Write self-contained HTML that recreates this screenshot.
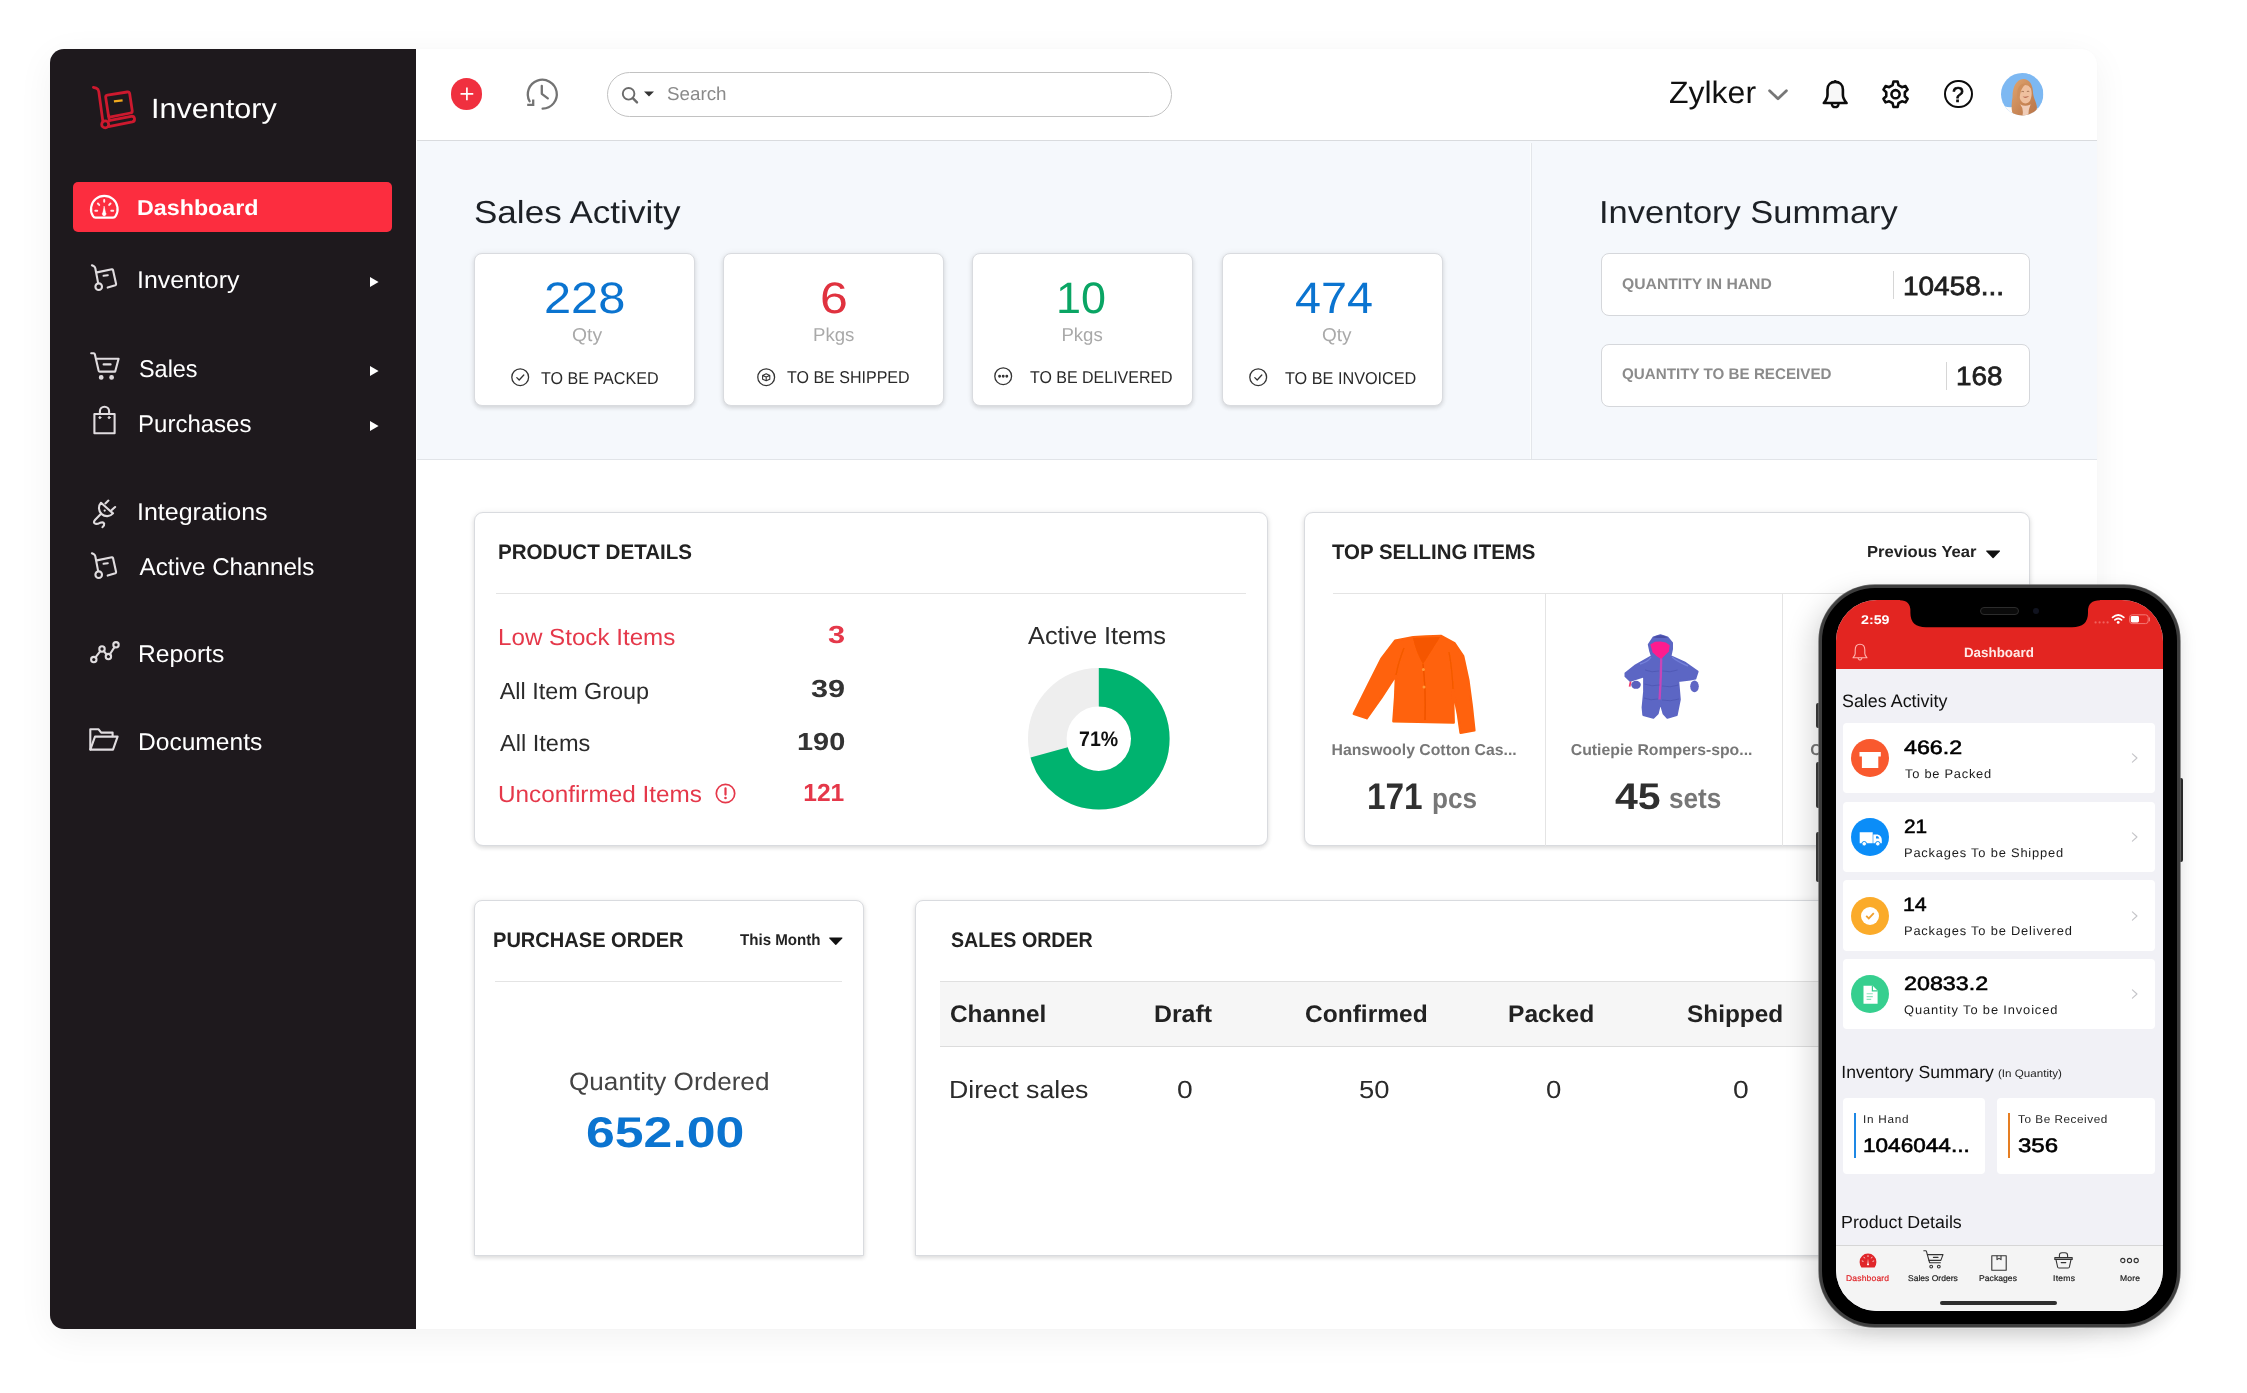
<!DOCTYPE html><html><head><meta charset="utf-8"><title>Inventory Dashboard</title><style>
*{box-sizing:border-box;margin:0;padding:0}
html,body{width:2247px;height:1393px;background:#fff;overflow:hidden}
body{font-family:"Liberation Sans",sans-serif;position:relative}
#root{position:absolute;left:0;top:0;width:2247px;height:1393px;will-change:transform}
.t{position:absolute;white-space:nowrap;transform-origin:0 50%;text-rendering:geometricPrecision}
.a{position:absolute}
svg{position:absolute;overflow:visible}
.card{position:absolute;background:#fff;border:1px solid #d9dbdf;border-radius:8px;box-shadow:0 2px 4px rgba(0,0,0,.12),0 0 7px rgba(0,0,0,.05)}
.ic{fill:none;stroke:#e0dcdf;stroke-width:2.1;stroke-linecap:round;stroke-linejoin:round}
</style></head><body><div id="root">
<div class="a" style="left:50px;top:49px;width:2047px;height:1280px;border-radius:16px;box-shadow:0 8px 36px rgba(0,0,0,.055),0 0 3px rgba(0,0,0,.03);background:#fff"></div>
<div class="a" style="left:50px;top:49px;width:366px;height:1280px;background:#1e191d;border-radius:14px 0 0 14px"></div>
<div class="a" style="left:417px;top:140px;width:1680px;height:320px;background:#f5f8fc;border-top:1px solid #d9dbde;border-bottom:1px solid #e1e4e8"></div>
<div class="a" style="left:1530px;top:143px;width:1px;height:316px;background:#fbfdfe"></div><div class="a" style="left:1531px;top:143px;width:1px;height:316px;background:#e3e6ea"></div>
<svg style="left:84px;top:78px" width="60" height="60" viewBox="84 78 60 60" fill="none" stroke="#cd192e" stroke-width="2.8" stroke-linecap="round" stroke-linejoin="round">
<path d="M93.4 87.4 L96.2 88.1 Q98.4 88.9 98.8 91.6 L102.9 121.6"/>
<path d="M107.4 95.1 L127.2 92 Q129.3 91.7 129.7 93.8 L132.2 110.6 Q132.5 112.6 130.5 113 L110.8 116.9 Q108.7 117.3 108.4 115.2 L105.7 97.4 Q105.4 95.4 107.4 95.1 Z"/>
<path d="M108.4 115.2 L109.4 120.6"/>
<path d="M110.2 120.4 L131.2 116.3 Q134 116 134.5 118.6 Q134.9 121.2 132.3 121.9 L108.6 126.6"/>
<circle cx="105.2" cy="124.4" r="3.5"/>
<path d="M113.9 101.4 L122.6 100.3" stroke="#f0a91e" stroke-width="2.3" stroke-linecap="butt"/>
</svg>
<span class="t" style="left:150.78px;top:90.67px;font-size:27.80px;line-height:36px;color:#fff;transform:scaleX(1.0991);">Inventory</span>
<div class="a" style="left:73px;top:182px;width:319px;height:50px;background:#fc2d3f;border-radius:5px"></div>
<svg style="left:80px;top:185px" width="60" height="45" viewBox="80 185 60 45" fill="none" stroke="#fff" stroke-width="2.2" stroke-linecap="round" stroke-linejoin="round">
<path d="M95.59 217.7 Q93.79 217.7 92.99 216.10 A13.3 13.3 0 1 1 115.61 216.10 Q114.81 217.7 113.01 217.7 Z"/>
<path d="M104.2 206.4 L105.5 212.6 A1.9 1.9 0 1 1 102.8 212.6 Z" fill="#fff" stroke-width=".5"/>
<path d="M104.2 199.9v1.8M97.9 203.5l1.3 1.4M110.5 203.5l-1.3 1.4M95.3 210.8h1.9M113.2 210.8h-1.9" stroke-width="2" opacity=".88"/>
</svg>
<span class="t" style="left:137.44px;top:193.62px;font-size:21.60px;line-height:28px;color:#fff;transform:scaleX(1.0777);font-weight:700;">Dashboard</span>
<span class="t" style="left:137.30px;top:265.01px;font-size:24.20px;line-height:31px;color:#fff;transform:scaleX(1.0292);">Inventory</span>
<svg style="left:369.8px;top:277.0px" width="9" height="10" viewBox="0 0 9 10"><path d="M0 0L8.6 5L0 10Z" fill="#fff"/></svg>
<span class="t" style="left:138.54px;top:353.81px;font-size:24.20px;line-height:31px;color:#fff;transform:scaleX(0.9682);">Sales</span>
<svg style="left:369.8px;top:365.8px" width="9" height="10" viewBox="0 0 9 10"><path d="M0 0L8.6 5L0 10Z" fill="#fff"/></svg>
<span class="t" style="left:137.63px;top:408.81px;font-size:24.20px;line-height:31px;color:#fff;transform:scaleX(0.9930);">Purchases</span>
<svg style="left:369.8px;top:420.8px" width="9" height="10" viewBox="0 0 9 10"><path d="M0 0L8.6 5L0 10Z" fill="#fff"/></svg>
<span class="t" style="left:137.29px;top:496.71px;font-size:24.20px;line-height:31px;color:#fff;transform:scaleX(1.0328);">Integrations</span>
<span class="t" style="left:139.55px;top:551.81px;font-size:24.20px;line-height:31px;color:#fff;">Active Channels</span>
<span class="t" style="left:137.58px;top:639.21px;font-size:24.20px;line-height:31px;color:#fff;transform:scaleX(1.0186);">Reports</span>
<span class="t" style="left:137.58px;top:727.01px;font-size:24.20px;line-height:31px;color:#fff;transform:scaleX(1.0156);">Documents</span>
<svg class="ic" style="left:84px;top:258px" width="40" height="40" viewBox="84 258 40 40" stroke-width="2.15">
<path d="M91.9 265.3 L94 266.3 Q95 266.9 95.3 268.2 L98.1 282.9"/>
<circle cx="98.7" cy="286.7" r="3.3"/>
<path d="M96.9 272.4 L111.9 269.3 Q112.8 269.1 113 270 L116.1 284.1 Q116.3 285 115.4 285.3 L107.7 287.6"/>
<path d="M103.6 275.8 L107.8 275.2"/>
</svg>
<svg class="ic" style="left:84px;top:546.4px" width="40" height="40" viewBox="84 258 40 40" stroke-width="2.15">
<path d="M91.9 265.3 L94 266.3 Q95 266.9 95.3 268.2 L98.1 282.9"/>
<circle cx="98.7" cy="286.7" r="3.3"/>
<path d="M96.9 272.4 L111.9 269.3 Q112.8 269.1 113 270 L116.1 284.1 Q116.3 285 115.4 285.3 L107.7 287.6"/>
<path d="M103.6 275.8 L107.8 275.2"/>
</svg>
<svg class="ic" style="left:89.5px;top:352px" width="30" height="28" viewBox="0 0 30 28">
<path d="M1.2 1.3 H3.6 Q4.6 1.4 4.9 2.4 L8.6 18.6 Q8.9 19.6 9.9 19.6 H25.2 L28.6 6.8 H6.1"/>
<path d="M13.6 12.4 H20.6"/>
<circle cx="11.2" cy="25.4" r="1.7" fill="#d9d5d8" stroke-width="1.4"/><circle cx="21.6" cy="25.4" r="1.7" fill="#d9d5d8" stroke-width="1.4"/>
</svg>
<svg class="ic" style="left:92.8px;top:404.6px" width="23" height="30" viewBox="0 0 23 30" stroke-linejoin="miter">
<path d="M1.4 9 H21.6 V28.2 H1.4 Z"/>
<path d="M6.9 8.6 V6.3 A4.6 4.6 0 0 1 16.1 6.3 V8.6"/>
<circle cx="6.9" cy="12.6" r="1" fill="#d9d5d8" stroke-width="1"/><circle cx="16.1" cy="12.6" r="1" fill="#d9d5d8" stroke-width="1"/>
</svg>
<svg class="ic" style="left:84px;top:492px" width="40" height="40" viewBox="84 492 40 40" stroke-width="2.1">
<path d="M101 502.8 L113 513.4 A8 8 0 0 1 101 502.8 Z"/>
<path d="M105.4 503.4 L108.4 500.6 M111.7 510 L115.1 507"/>
<circle cx="104.7" cy="510.6" r="1.1" fill="#e4e0e3" stroke="none"/>
<path d="M100.8 514 L95.2 519.8 Q92.6 522.8 95.4 523.8 Q97.4 524.2 100 522.8 Q103.4 521.6 104.2 523.6 Q104.6 525.4 102.4 527.2"/>
</svg>
<svg class="ic" style="left:89.6px;top:641.4px" width="30" height="23" viewBox="0 0 30 23">
<circle cx="3.8" cy="18.6" r="2.7"/><circle cx="12" cy="8" r="2.7"/><circle cx="18.4" cy="15.6" r="2.7"/><circle cx="26" cy="3.8" r="2.7"/>
<path d="M5.5 16.4 L10.3 10.2 M13.8 10.1 L16.6 13.5 M19.9 13.3 L24.5 6.1"/>
</svg>
<svg class="ic" style="left:89.4px;top:728.4px" width="30" height="23" viewBox="0 0 30 23" stroke-linejoin="miter">
<path d="M1.3 21.6 V1.3 H9.6 L12.2 4.6 H23.6 V8.2"/>
<path d="M1.3 21.6 L6 8.6 H28.6 L24 21.6 Z"/>
</svg>
<div class="a" style="left:450.6px;top:78.2px;width:31.8px;height:31.8px;border-radius:50%;background:#f0303f"></div>
<svg style="left:450.6px;top:78.2px" width="31.8" height="31.8" viewBox="0 0 32 32"><path d="M16 9.6V22.4M9.6 16H22.4" stroke="#fff" stroke-width="1.7" fill="none"/></svg>
<svg style="left:526px;top:78px" width="34" height="34" viewBox="526 78 34 34" fill="none" stroke="#737373" stroke-width="2.3" stroke-linecap="round" stroke-linejoin="round">
<path d="M542.6 108.7 A14.5 14.5 0 1 0 529.6 101.2"/>
<path d="M527.2 104.9 H533.2 V99.6" stroke-linejoin="miter" stroke-linecap="butt"/>
<path d="M541.8 85.8 V93.8 L547.8 98.3"/>
</svg>
<div class="a" style="left:606.8px;top:71.8px;width:565.6px;height:44.8px;border:1.5px solid #c2c2c2;border-radius:23px;background:#fff"></div>
<svg style="left:621px;top:86px" width="18" height="18" viewBox="0 0 18 18" fill="none" stroke="#6b6b6b" stroke-width="1.9" stroke-linecap="round"><circle cx="7.6" cy="7.8" r="5.8"/><path d="M11.8 12.2 L16 16.4" stroke-width="2.4"/></svg>
<svg style="left:644px;top:91.4px" width="10" height="6" viewBox="0 0 10 6"><path d="M0 0.4H10L5 5.6Z" fill="#333"/></svg>
<span class="t" style="left:666.65px;top:82.16px;font-size:18.60px;line-height:24px;color:#8a8a8a;transform:scaleX(1.0109);">Search</span>
<span class="t" style="left:1669.49px;top:72.86px;font-size:31.00px;line-height:40px;color:#111;transform:scaleX(1.0315);">Zylker</span>
<svg style="left:1768px;top:89px" width="20" height="12" viewBox="0 0 20 12" fill="none" stroke="#777" stroke-width="2.8" stroke-linecap="round" stroke-linejoin="round"><path d="M1.6 1.8 L10 9.8 L18.4 1.8"/></svg>
<svg style="left:1821px;top:79px" width="29" height="31" viewBox="0 0 29 31" fill="none" stroke="#0c0c0c" stroke-width="2.6" stroke-linecap="round" stroke-linejoin="round">
<path d="M14.2 2.2 V2.8"/>
<path d="M6.5 16 V10.6 C6.5 5.8 9.9 2.9 14.2 2.9 C18.5 2.9 21.9 5.8 21.9 10.6 V16 C21.9 19.4 23.4 21.4 25.6 24 H2.8 C5 21.4 6.5 19.4 6.5 16 Z" fill="#f8f8f8"/>
<path d="M10.8 25.2 C11.2 27.4 12.6 28.2 14.2 28.2 C15.8 28.2 17.2 27.4 17.6 25.2" stroke-width="2.2"/>
</svg>
<svg style="left:1881px;top:79px" width="30" height="31" viewBox="0 0 30 31" fill="none" stroke="#0c0c0c" stroke-width="2.6" stroke-linejoin="round">
<path d="M11.61 6.16 L12.47 2.47 L16.63 2.47 L17.49 6.16 L20.91 8.14 L24.53 7.03 L26.62 10.64 L23.84 13.22 L23.84 17.18 L26.62 19.76 L24.53 23.37 L20.91 22.26 L17.49 24.24 L16.63 27.93 L12.47 27.93 L11.61 24.24 L8.19 22.26 L4.57 23.37 L2.48 19.76 L5.26 17.18 L5.26 13.22 L2.48 10.64 L4.57 7.03 L8.19 8.14Z"/><circle cx="14.55" cy="15.2" r="4.1"/></svg>
<div class="a" style="left:1944.2px;top:80px;width:28.4px;height:28.4px;border:2.7px solid #0c0c0c;border-radius:50%"></div>
<span class="t" style="left:1952.32px;top:81.25px;font-size:21.50px;line-height:28px;color:#0c0c0c;transform:scaleX(0.9924);-webkit-text-stroke:.7px #0c0c0c;">?</span>
<svg style="left:2001px;top:73px" width="42.4" height="42.4" viewBox="0 0 42 42">
<defs><clipPath id="av"><circle cx="21" cy="21" r="21"/></clipPath>
<linearGradient id="hg" x1="0" y1="0" x2="1" y2="1"><stop offset="0" stop-color="#e0a672"/><stop offset=".55" stop-color="#c98756"/><stop offset="1" stop-color="#b9764a"/></linearGradient></defs>
<g clip-path="url(#av)"><rect width="42" height="42" fill="#7db8f2"/>
<path d="M-2 42 L3 33 Q10 35 14 33 L30 33 Q35 36 40 35 L44 42 Z" fill="#fdfbfa"/>
<path d="M12.4 43 C9.6 36 10.4 30 11.4 24 C11.4 13.5 15.4 6.4 22 6 C29.4 6.4 31.6 13.4 31.8 20 C32.4 26 36.4 31 35.4 36 C34.4 39.4 32 41.4 30 43 Z" fill="url(#hg)"/>
<path d="M18.4 14.4 C21.4 10.6 27.4 11 29.6 15.4 C31 19.4 30.6 25.4 27.8 28.8 C25.8 30.6 22.6 30.6 20.6 28.6 C17.8 25.4 16.8 18.6 18.4 14.4 Z" fill="#efc09f"/>
<path d="M16.2 19.4 C16.6 13 20.6 9.6 25.4 10.6 C22.4 12.4 19.6 15.6 18.6 23.4 C17.8 26.4 17.6 29.4 18.6 32.4 C16.4 29 15.6 24 16.2 19.4 Z" fill="#cf8f5c"/>
<path d="M21.4 23.2 Q24.6 26 28 22.8 Q24.8 24.2 21.4 23.2 Z" fill="#a8553f"/>
<path d="M20.2 18.6 Q21.6 17.9 22.8 18.6 M25.6 18.4 Q26.8 17.7 28 18.4" stroke="#8a5a3c" stroke-width=".7" fill="none"/>
<path d="M19 31 Q23 36 21 43 L27 43 Q27 36 29.4 31 Q24 34 19 31 Z" fill="#f0cdb8"/>
</g></svg>
<span class="t" style="left:474.01px;top:191.98px;font-size:31.80px;line-height:41px;color:#1d2126;transform:scaleX(1.1021);">Sales Activity</span>
<span class="t" style="left:1599.22px;top:191.98px;font-size:31.80px;line-height:41px;color:#1d2126;transform:scaleX(1.0840);">Inventory Summary</span>
<div class="card" style="left:474px;top:253px;width:221px;height:153px"></div>
<span class="t" style="left:543.95px;top:270.35px;font-size:44.00px;line-height:57px;color:#0b74d0;transform:scaleX(1.1084);">228</span>
<span class="t" style="left:572.49px;top:322.66px;font-size:18.60px;line-height:24px;color:#a9a9a9;transform:scaleX(1.0386);">Qty</span>
<span class="t" style="left:540.64px;top:367.24px;font-size:17.20px;line-height:22px;color:#2a2a2a;transform:scaleX(0.9379);">TO BE PACKED</span>
<svg style="left:510.8px;top:368.2px" width="18.4" height="18.4" viewBox="0 0 18.4 18.4" fill="none" stroke="#333" stroke-width="1.3" stroke-linecap="round" stroke-linejoin="round"><circle cx="9.2" cy="9.2" r="8.4"/><path d="M5.8 9.6 L8.2 12 L12.8 7"/></svg>
<div class="card" style="left:723px;top:253px;width:221px;height:153px"></div>
<span class="t" style="left:820.06px;top:270.35px;font-size:44.00px;line-height:57px;color:#e0323f;transform:scaleX(1.1378);">6</span>
<span class="t" style="left:813.08px;top:322.66px;font-size:18.60px;line-height:24px;color:#a9a9a9;">Pkgs</span>
<span class="t" style="left:787.34px;top:366.14px;font-size:17.20px;line-height:22px;color:#2a2a2a;transform:scaleX(0.9327);">TO BE SHIPPED</span>
<svg style="left:757px;top:367.5px" width="18.4" height="18.4" viewBox="0 0 18.4 18.4" fill="none" stroke="#333" stroke-width="1.3" stroke-linecap="round" stroke-linejoin="round"><circle cx="9.2" cy="9.2" r="8.4"/><path d="M5.6 7.4 L9.2 5.8 L12.8 7.4 V11.2 L9.2 12.8 L5.6 11.2 Z M5.6 7.4 L9.2 9 L12.8 7.4 M9.2 9 V12.8" stroke-width="1.1"/></svg>
<div class="card" style="left:972px;top:253px;width:221px;height:153px"></div>
<span class="t" style="left:1056.28px;top:270.35px;font-size:44.00px;line-height:57px;color:#0aa564;transform:scaleX(1.0212);">10</span>
<span class="t" style="left:1061.38px;top:322.66px;font-size:18.60px;line-height:24px;color:#a9a9a9;">Pkgs</span>
<span class="t" style="left:1029.84px;top:366.14px;font-size:17.20px;line-height:22px;color:#2a2a2a;transform:scaleX(0.9293);">TO BE DELIVERED</span>
<svg style="left:993.6px;top:367px" width="18.4" height="18.4" viewBox="0 0 18.4 18.4" fill="none" stroke="#333" stroke-width="1.3" stroke-linecap="round" stroke-linejoin="round"><circle cx="9.2" cy="9.2" r="8.4"/><circle cx="5.6" cy="9.2" r=".8" fill="#333"/><circle cx="9.2" cy="9.2" r=".8" fill="#333"/><circle cx="12.8" cy="9.2" r=".8" fill="#333"/></svg>
<div class="card" style="left:1222px;top:253px;width:221px;height:153px"></div>
<span class="t" style="left:1295.33px;top:270.35px;font-size:44.00px;line-height:57px;color:#0b74d0;transform:scaleX(1.0617);">474</span>
<span class="t" style="left:1321.70px;top:322.66px;font-size:18.60px;line-height:24px;color:#a9a9a9;transform:scaleX(1.0208);">Qty</span>
<span class="t" style="left:1284.84px;top:367.24px;font-size:17.20px;line-height:22px;color:#2a2a2a;transform:scaleX(0.9441);">TO BE INVOICED</span>
<svg style="left:1249px;top:368.2px" width="18.4" height="18.4" viewBox="0 0 18.4 18.4" fill="none" stroke="#333" stroke-width="1.3" stroke-linecap="round" stroke-linejoin="round"><circle cx="9.2" cy="9.2" r="8.4"/><path d="M5.8 9.6 L8.2 12 L12.8 7"/></svg>
<div class="a" style="left:1601px;top:253px;width:429px;height:63px;background:#fff;border:1px solid #d5d7db;border-radius:8px"></div>
<span class="t" style="left:1622.36px;top:275.46px;font-size:15.40px;line-height:20px;color:#8b8b8b;transform:scaleX(1.0206);font-weight:700;">QUANTITY IN HAND</span>
<div class="a" style="left:1893px;top:270.5px;width:1px;height:28.5px;background:#d6d6d6"></div>
<span class="t" style="left:1903.47px;top:268.95px;font-size:26.40px;line-height:34px;color:#1f1f1f;transform:scaleX(1.0594);-webkit-text-stroke:.75px #1f1f1f;">10458...</span>
<div class="a" style="left:1601px;top:344px;width:429px;height:63px;background:#fff;border:1px solid #d5d7db;border-radius:8px"></div>
<span class="t" style="left:1622.38px;top:365.46px;font-size:15.40px;line-height:20px;color:#8b8b8b;transform:scaleX(0.9867);font-weight:700;">QUANTITY TO BE RECEIVED</span>
<div class="a" style="left:1945.5px;top:361.5px;width:1px;height:28.5px;background:#d6d6d6"></div>
<span class="t" style="left:1955.98px;top:358.95px;font-size:26.40px;line-height:34px;color:#1f1f1f;transform:scaleX(1.0565);-webkit-text-stroke:.75px #1f1f1f;">168</span>
<div class="card" style="left:474px;top:512px;width:794px;height:334px;border-radius:9px"></div>
<span class="t" style="left:498.32px;top:538.92px;font-size:21.00px;line-height:27px;color:#222;transform:scaleX(0.9805);font-weight:700;">PRODUCT DETAILS</span>
<div class="a" style="left:496.2px;top:592.6px;width:750px;height:1.4px;background:#e4e4e4"></div>
<span class="t" style="left:497.72px;top:621.69px;font-size:23.40px;line-height:30px;color:#e5384a;transform:scaleX(1.0332);">Low Stock Items</span>
<span class="t" style="left:827.59px;top:619.98px;font-size:24.60px;line-height:32px;color:#e5384a;transform:scaleX(1.2512);font-weight:700;">3</span>
<span class="t" style="left:499.65px;top:676.09px;font-size:23.40px;line-height:30px;color:#2b2b2b;">All Item Group</span>
<span class="t" style="left:810.60px;top:674.38px;font-size:24.60px;line-height:32px;color:#333;transform:scaleX(1.2478);font-weight:700;">39</span>
<span class="t" style="left:499.65px;top:728.49px;font-size:23.40px;line-height:30px;color:#2b2b2b;transform:scaleX(1.0065);">All Items</span>
<span class="t" style="left:796.58px;top:726.78px;font-size:24.60px;line-height:32px;color:#333;transform:scaleX(1.1745);font-weight:700;">190</span>
<span class="t" style="left:497.82px;top:779.49px;font-size:23.40px;line-height:30px;color:#e5384a;transform:scaleX(1.0386);">Unconfirmed Items</span>
<span class="t" style="left:803.25px;top:777.78px;font-size:24.60px;line-height:32px;color:#e5384a;font-weight:700;">121</span>
<svg style="left:715px;top:782.6px" width="21" height="21" viewBox="0 0 21 21" fill="none" stroke="#e5384a" stroke-width="1.7" stroke-linecap="round"><circle cx="10.5" cy="10.5" r="9.2"/><path d="M10.5 5.4V11.6" stroke-width="2.2"/><circle cx="10.5" cy="15" r=".6" fill="#e5384a" stroke-width="1.4"/></svg>
<span class="t" style="left:1027.95px;top:621.08px;font-size:24.60px;line-height:32px;color:#2b2b2b;transform:scaleX(1.0298);">Active Items</span>
<svg style="left:0;top:0" width="2247" height="1393" viewBox="0 0 2247 1393" pointer-events="none">
<circle cx="1098.8" cy="738.7" r="51.5" fill="none" stroke="#eeeeee" stroke-width="38.6"/>
<circle cx="1098.8" cy="738.7" r="51.5" fill="none" stroke="#00b36f" stroke-width="38.6" stroke-dasharray="228.45 323.58" transform="rotate(-90 1098.8 738.7)"/>
</svg>
<span class="t" style="left:1079.06px;top:726.12px;font-size:21.00px;line-height:27px;color:#111;transform:scaleX(0.9316);font-weight:700;">71%</span>
<div class="card" style="left:1304px;top:512px;width:726px;height:334px;border-radius:9px"></div>
<span class="t" style="left:1332.37px;top:538.92px;font-size:21.00px;line-height:27px;color:#222;transform:scaleX(0.9722);font-weight:700;">TOP SELLING ITEMS</span>
<span class="t" style="left:1866.79px;top:542.26px;font-size:16.00px;line-height:21px;color:#222;transform:scaleX(1.0370);font-weight:700;">Previous Year</span>
<svg style="left:1985.6px;top:549.6px" width="14.2" height="8.4" viewBox="0 0 14.2 8.4"><path d="M0.6 0.4H13.6Q14.4 0.6 13.8 1.4L7.6 8Q7.1 8.4 6.6 8L0.4 1.4Q-.2 .6 .6 .4Z" fill="#111"/></svg>
<div class="a" style="left:1332.6px;top:592.6px;width:697px;height:1.4px;background:#e4e4e4"></div>
<div class="a" style="left:1545.2px;top:593px;width:1.3px;height:253px;background:#e4e4e4"></div>
<div class="a" style="left:1781.6px;top:593px;width:1.3px;height:253px;background:#e4e4e4"></div>
<svg style="left:1340px;top:620px" width="150" height="120" viewBox="1340 620 150 120">
<defs><filter id="sb" x="-5%" y="-5%" width="110%" height="110%"><feGaussianBlur stdDeviation=".5"/></filter></defs>
<g filter="url(#sb)">
<polygon points="1395.1,640.7 1413.2,637.2 1426.2,636.4 1440.8,635.9 1454.6,643.3 1463.2,656.2 1468.4,680.3 1471.8,706.2 1474.4,730.3 1460.6,732.9 1458.0,714.8 1452.9,688.9 1453.7,722.5 1393.4,721.2 1395.1,697.5 1396.0,675.1 1381.4,697.5 1366.7,718.2 1353.8,713.9 1368.4,684.6 1381.4,658.8" fill="#ff6208" stroke="#ff6208" stroke-width="2.4" stroke-linejoin="round"/>
<path d="M1413 638 Q1416 652 1423 664 Q1432 650 1440 637" fill="#f55600"/>
<path d="M1423 664 Q1426 690 1425 720" stroke="#ee5200" stroke-width="1.3" fill="none"/>
<path d="M1396 675 Q1399 660 1404 648 M1453 689 Q1452 668 1449 652" stroke="#f25800" stroke-width="1.2" fill="none"/>
<circle cx="1423.4" cy="669.6" r="1.5" fill="#ff9a3a"/><circle cx="1424" cy="687" r="1.5" fill="#ff9a3a"/>
</g></svg>
<svg style="left:1610px;top:622px" width="110" height="108" viewBox="1610 622 110 108">
<g filter="url(#sb)">
<polygon points="1660.4,635.2 1653.4,637.5 1648.8,644.5 1650.3,651.5 1651.9,656.1 1635.6,665.4 1625.5,673.2 1625.5,676.3 1630.2,680.9 1644.1,676.3 1644.1,691.8 1642.6,707.3 1643.3,715.0 1653.4,717.7 1657.7,713.5 1660.4,702.6 1663.5,713.5 1667.4,717.7 1676.7,715.0 1679.8,699.5 1678.2,680.9 1690.6,679.4 1695.3,678.6 1697.6,671.6 1684.4,662.3 1670.5,656.1 1672.0,649.1 1672.0,642.9 1667.4,637.5" fill="#5c66c4" stroke="#5c66c4" stroke-width="2" stroke-linejoin="round"/>
<path d="M1653 637.5 Q1660 633 1668 637.5 Q1662 638.5 1653 637.5Z" fill="#4a4ea6"/>
<polygon points="1650.3,644.5 1655.0,641.8 1660.4,641.4 1665.8,642.5 1669.7,645.3 1668.9,651.5 1664.3,656.1 1661.2,659.2 1656.5,656.1 1652.6,652.2" fill="#ff1d8e"/>
<path d="M1661.2 658.4 L1660.8 676.3 L1659.6 699.5" stroke="#c745b8" stroke-width="2.3" fill="none"/>
<ellipse cx="1636" cy="684.8" rx="4.8" ry="4" fill="#5a60bd"/><path d="M1630.6 681.6 L1629.6 686.6" stroke="#ef3a6a" stroke-width="1.8"/>
<ellipse cx="1694.5" cy="686.3" rx="4.3" ry="5.9" fill="#5f66c4"/>
<path d="M1645 670 Q1652 673 1659 671 M1644.5 684 Q1652 687 1659.5 685 M1644 698 Q1651 701 1658 699 M1662.5 671 Q1670 673 1677.5 670 M1662 686 Q1670 688 1678.5 685 M1662 700 Q1670 702 1679 699" stroke="#4f58b4" stroke-width=".9" fill="none"/>
<path d="M1640 664 Q1648 662 1651 657 M1672 657 Q1678 662 1688 666" stroke="#7480da" stroke-width="1.4" fill="none"/>
</g></svg>
<span class="t" style="left:1331.54px;top:740.13px;font-size:15.80px;line-height:21px;color:#777;font-weight:700;">Hanswooly Cotton Cas...</span>
<span class="t" style="left:1570.75px;top:740.13px;font-size:15.80px;line-height:21px;color:#777;font-weight:700;">Cutiepie Rompers-spo...</span>
<span class="t" style="left:1810.35px;top:740.13px;font-size:15.80px;line-height:21px;color:#777;font-weight:700;">C</span>
<span class="t" style="left:1366.90px;top:772.88px;font-size:37.00px;line-height:48px;color:#2f2f2f;transform:scaleX(0.9011);font-weight:700;">171</span>
<span class="t" style="left:1431.67px;top:781.32px;font-size:28.50px;line-height:37px;color:#777;transform:scaleX(0.9183);font-weight:700;">pcs</span>
<span class="t" style="left:1615.08px;top:772.88px;font-size:37.00px;line-height:48px;color:#2f2f2f;transform:scaleX(1.1095);font-weight:700;">45</span>
<span class="t" style="left:1669.08px;top:781.32px;font-size:28.50px;line-height:37px;color:#777;transform:scaleX(0.9185);font-weight:700;">sets</span>
<div class="card" style="left:474px;top:900px;width:390px;height:356px;border-radius:8px 8px 0 0"></div>
<span class="t" style="left:493.26px;top:927.02px;font-size:21.00px;line-height:27px;color:#222;transform:scaleX(0.9550);font-weight:700;">PURCHASE ORDER</span>
<span class="t" style="left:739.93px;top:929.93px;font-size:15.80px;line-height:21px;color:#222;transform:scaleX(0.9568);font-weight:700;">This Month</span>
<svg style="left:828.8px;top:936.8px" width="13.6" height="8.2" viewBox="0 0 14.2 8.4"><path d="M0.6 0.4H13.6Q14.4 0.6 13.8 1.4L7.6 8Q7.1 8.4 6.6 8L0.4 1.4Q-.2 .6 .6 .4Z" fill="#111"/></svg>
<div class="a" style="left:494.6px;top:981px;width:347.8px;height:1.4px;background:#e4e4e4"></div>
<span class="t" style="left:569.06px;top:1065.84px;font-size:25.00px;line-height:32px;color:#444;transform:scaleX(1.0452);">Quantity Ordered</span>
<span class="t" style="left:586.10px;top:1105.00px;font-size:43.00px;line-height:56px;color:#0b74d0;transform:scaleX(1.2045);font-weight:700;">652.00</span>
<div class="card" style="left:915px;top:900px;width:1115px;height:356px;border-radius:8px 8px 0 0"></div>
<span class="t" style="left:950.63px;top:927.02px;font-size:21.00px;line-height:27px;color:#222;transform:scaleX(0.9346);font-weight:700;">SALES ORDER</span>
<div class="a" style="left:940px;top:981.4px;width:1089px;height:65.4px;background:#f6f6f6;border-top:1.4px solid #e0e0e0;border-bottom:1.4px solid #dcdcdc"></div>
<span class="t" style="left:950.20px;top:998.58px;font-size:24.00px;line-height:31px;color:#222;transform:scaleX(1.0164);font-weight:700;">Channel</span>
<span class="t" style="left:1154.24px;top:998.58px;font-size:24.00px;line-height:31px;color:#222;transform:scaleX(1.0350);font-weight:700;">Draft</span>
<span class="t" style="left:1304.69px;top:998.58px;font-size:24.00px;line-height:31px;color:#222;transform:scaleX(1.0219);font-weight:700;">Confirmed</span>
<span class="t" style="left:1507.65px;top:998.58px;font-size:24.00px;line-height:31px;color:#222;transform:scaleX(1.0251);font-weight:700;">Packed</span>
<span class="t" style="left:1686.50px;top:998.58px;font-size:24.00px;line-height:31px;color:#222;transform:scaleX(1.0163);font-weight:700;">Shipped</span>
<span class="t" style="left:949.01px;top:1075.31px;font-size:24.80px;line-height:32px;color:#2b2b2b;transform:scaleX(1.0757);">Direct sales</span>
<span class="t" style="left:1177.10px;top:1075.31px;font-size:24.80px;line-height:32px;color:#2b2b2b;letter-spacing:0.43px;transform:scaleX(1.1400);">0</span>
<span class="t" style="left:1359.10px;top:1075.31px;font-size:24.80px;line-height:32px;color:#2b2b2b;transform:scaleX(1.1044);">50</span>
<span class="t" style="left:1545.82px;top:1075.31px;font-size:24.80px;line-height:32px;color:#2b2b2b;transform:scaleX(1.1134);">0</span>
<span class="t" style="left:1732.80px;top:1075.31px;font-size:24.80px;line-height:32px;color:#2b2b2b;letter-spacing:0.16px;transform:scaleX(1.1400);">0</span>
<div class="a" style="left:1816px;top:703px;width:5px;height:25px;background:#3c3c3c;border-radius:2px"></div>
<div class="a" style="left:1816px;top:762px;width:5px;height:46px;background:#3c3c3c;border-radius:2px"></div>
<div class="a" style="left:1816px;top:832px;width:5px;height:50px;background:#3c3c3c;border-radius:2px"></div>
<div class="a" style="left:2178px;top:778px;width:5px;height:84px;background:#2b2b2b;border-radius:2px"></div>
<div class="a" style="left:1819px;top:585px;width:361.0px;height:742.0px;border-radius:56px;background:#000;border:3px solid #3e3e3e;box-shadow:0 0 0 .7px #6e6e6e,-10px 8px 26px rgba(0,0,0,.13), 4px 6px 16px rgba(0,0,0,.07)"></div>
<div class="a" style="left:1836px;top:600px;width:327.0px;height:711.0px;border-radius:41px;background:#f1f1f6;overflow:hidden"><div class="a" style="left:0;top:0;width:100%;height:68.6px;background:#e32521"></div><div class="a" style="left:0;top:645.4px;width:100%;height:70px;background:#f4f4f4;border-top:1px solid #d6d6d6"></div></div>
<svg style="left:1900px;top:599px" width="200" height="30" viewBox="0 0 200 30"><path d="M0 0 H200 V1.2 Q188 1.2 188 12 V14 Q188 28.2 172 28.2 H26 Q10.4 28.2 10.4 14 V12 Q10.4 1.2 0 1.2 Z" fill="#000"/></svg>
<div class="a" style="left:1979.8px;top:606.6px;width:39px;height:8.2px;border-radius:4.2px;background:#0b0b0b;border:1px solid #2c2c2c"></div>
<div class="a" style="left:2032.6px;top:607.8px;width:6.6px;height:6.6px;border-radius:50%;background:#10131f"></div>
<span class="t" style="left:1861.41px;top:612.03px;font-size:12.60px;line-height:16px;color:#fff;transform:scaleX(1.1310);font-weight:700;">2:59</span>
<svg style="left:2094px;top:612px" width="58" height="14" viewBox="0 0 58 14">
<g fill="#f0625e"><circle cx="1.6" cy="10.4" r="1.1"/><circle cx="5.6" cy="10.4" r="1.1"/><circle cx="9.6" cy="10.4" r="1.1"/><circle cx="13.6" cy="10.4" r="1.1"/></g>
<g fill="none" stroke="#fff" stroke-width="1.8" stroke-linecap="round"><path d="M18.6 5.4 Q24.2 .6 29.8 5.4"/><path d="M20.9 7.9 Q24.2 5.2 27.5 7.9"/></g><circle cx="24.2" cy="10.4" r="1.4" fill="#fff"/>
<rect x="35.6" y="2.8" width="18.6" height="8.8" rx="2.6" fill="none" stroke="#f47a76" stroke-width="1"/><rect x="36.8" y="4" width="8.2" height="6.4" rx="1.4" fill="#fff"/><path d="M55.4 5.8 V8.8" stroke="#f47a76" stroke-width="1.2" stroke-linecap="round"/>
</svg>
<svg style="left:1852.4px;top:642.6px" width="16" height="19" viewBox="0 0 16 19" fill="none" stroke="#ffb3ae" stroke-width="1.1" stroke-linecap="round" stroke-linejoin="round">
<path d="M8 1.2 C4.6 1.2 3.2 4 3.2 7 V10.6 C3.2 12.4 2 13.6 1 14.8 H15 C14 13.6 12.8 12.4 12.8 10.6 V7 C12.8 4 11.4 1.2 8 1.2 Z"/><path d="M6.2 15.4 Q8 18.6 9.8 15.4"/></svg>
<span class="t" style="left:1963.90px;top:644.16px;font-size:13.40px;line-height:17px;color:#ffe9e6;font-weight:700;">Dashboard</span>
<span class="t" style="left:1842.09px;top:689.56px;font-size:18.00px;line-height:23px;color:#111;transform:scaleX(0.9935);">Sales Activity</span>
<div class="a" style="left:1842.8px;top:723px;width:312.4px;height:70.4px;background:#fff;border-radius:4px"></div>
<div class="a" style="left:1851.4px;top:739.3px;width:38px;height:38px;border-radius:50%;background:#f9592e"></div>
<svg style="left:1851.4px;top:739.3px" width="38" height="38" viewBox="0 0 38 38"><path d="M8.5 13 H29.8 V17.5 H27.3 V28.9 H10.9 V17.5 H8.5 Z" fill="#fff"/></svg>
<span class="t" style="left:1904.37px;top:735.98px;font-size:19.40px;line-height:25px;color:#000;transform:scaleX(1.1989);-webkit-text-stroke:.55px #000;">466.2</span>
<span class="t" style="left:1904.61px;top:766.17px;font-size:12.50px;line-height:16px;color:#1c1c1c;letter-spacing:0.72px;transform:scaleX(1.0300);">To be Packed</span>
<svg style="left:2130.8px;top:753.3px" width="8" height="10" viewBox="0 0 8 10" fill="none" stroke="#c4c4c8" stroke-width="1.1" stroke-linecap="round" stroke-linejoin="round"><path d="M1.4 .8 L6 5 L1.4 9.2"/></svg>
<div class="a" style="left:1842.8px;top:801.6px;width:312.4px;height:70.4px;background:#fff;border-radius:4px"></div>
<div class="a" style="left:1851.4px;top:817.9px;width:38px;height:38px;border-radius:50%;background:#0b8df8"></div>
<svg style="left:1851.4px;top:817.9px" width="38" height="38" viewBox="0 0 38 38"><path d="M8.7 14.2 H21.7 V25.3 H8.7 Z M22.3 16.4 H26.6 Q30.8 17.6 30.8 22 V25.3 H22.3 Z" fill="#fff"/><path d="M25 18.2 H27 L28.4 20.6 H25 Z" fill="#0b8df8"/><circle cx="13.2" cy="25.8" r="2.3" fill="#fff" stroke="#0b8df8" stroke-width="1"/><circle cx="26.8" cy="25.8" r="2.3" fill="#fff" stroke="#0b8df8" stroke-width="1"/></svg>
<span class="t" style="left:1903.85px;top:814.58px;font-size:19.40px;line-height:25px;color:#000;transform:scaleX(1.0735);-webkit-text-stroke:.55px #000;">21</span>
<span class="t" style="left:1903.84px;top:844.77px;font-size:12.50px;line-height:16px;color:#1c1c1c;letter-spacing:0.78px;transform:scaleX(1.0300);">Packages To be Shipped</span>
<svg style="left:2130.8px;top:831.9px" width="8" height="10" viewBox="0 0 8 10" fill="none" stroke="#c4c4c8" stroke-width="1.1" stroke-linecap="round" stroke-linejoin="round"><path d="M1.4 .8 L6 5 L1.4 9.2"/></svg>
<div class="a" style="left:1842.8px;top:880.2px;width:312.4px;height:70.4px;background:#fff;border-radius:4px"></div>
<div class="a" style="left:1851.4px;top:896.5px;width:38px;height:38px;border-radius:50%;background:#fbab2a"></div>
<svg style="left:1851.4px;top:896.5px" width="38" height="38" viewBox="0 0 38 38"><circle cx="19" cy="19" r="9" fill="#fff"/><path d="M15.2 18.8 L17.8 21.4 L22.8 16.2" fill="none" stroke="#f0a030" stroke-width="1.8"/></svg>
<span class="t" style="left:1903.27px;top:893.18px;font-size:19.40px;line-height:25px;color:#000;transform:scaleX(1.1007);-webkit-text-stroke:.55px #000;">14</span>
<span class="t" style="left:1903.84px;top:923.37px;font-size:12.50px;line-height:16px;color:#1c1c1c;letter-spacing:0.78px;transform:scaleX(1.0300);">Packages To be Delivered</span>
<svg style="left:2130.8px;top:910.5px" width="8" height="10" viewBox="0 0 8 10" fill="none" stroke="#c4c4c8" stroke-width="1.1" stroke-linecap="round" stroke-linejoin="round"><path d="M1.4 .8 L6 5 L1.4 9.2"/></svg>
<div class="a" style="left:1842.8px;top:958.8px;width:312.4px;height:70.4px;background:#fff;border-radius:4px"></div>
<div class="a" style="left:1851.4px;top:975.1px;width:38px;height:38px;border-radius:50%;background:#36cf8f"></div>
<svg style="left:1851.4px;top:975.1px" width="38" height="38" viewBox="0 0 38 38"><path d="M12.5 10.7 H21.6 L26.6 15.7 V28.8 H12.5 Z" fill="#fff"/><path d="M21.4 10.7 V15.9 H26.6" fill="#fff" stroke="#36cf8f" stroke-width="1.2"/><path d="M15.6 18.8 H21.8 M15.6 21.6 H21.8 M15.6 24.4 H20.2" stroke="#8fe3bf" stroke-width="1.1"/></svg>
<span class="t" style="left:1903.73px;top:971.78px;font-size:19.40px;line-height:25px;color:#000;transform:scaleX(1.2013);-webkit-text-stroke:.55px #000;">20833.2</span>
<span class="t" style="left:1904.29px;top:1001.97px;font-size:12.50px;line-height:16px;color:#1c1c1c;letter-spacing:0.84px;transform:scaleX(1.0300);">Quantity To be Invoiced</span>
<svg style="left:2130.8px;top:989.1px" width="8" height="10" viewBox="0 0 8 10" fill="none" stroke="#c4c4c8" stroke-width="1.1" stroke-linecap="round" stroke-linejoin="round"><path d="M1.4 .8 L6 5 L1.4 9.2"/></svg>
<span class="t" style="left:1841.27px;top:1060.50px;font-size:17.60px;line-height:23px;color:#111;">Inventory Summary</span>
<span class="t" style="left:1997.88px;top:1067.36px;font-size:10.80px;line-height:14px;color:#222;transform:scaleX(1.0761);">(In Quantity)</span>
<div class="a" style="left:1842.8px;top:1098.4px;width:142.4px;height:75.6px;background:#fff;border-radius:4px"></div>
<div class="a" style="left:1997px;top:1098.4px;width:158.2px;height:75.6px;background:#fff;border-radius:4px"></div>
<div class="a" style="left:1854.2px;top:1113.4px;width:1.8px;height:44.4px;background:#1e88e5"></div>
<div class="a" style="left:2008.2px;top:1113.4px;width:1.8px;height:44.4px;background:#e67e22"></div>
<span class="t" style="left:1863.32px;top:1113.35px;font-size:11.40px;line-height:15px;color:#222;letter-spacing:0.73px;transform:scaleX(1.0300);">In Hand</span>
<span class="t" style="left:1862.68px;top:1133.91px;font-size:19.60px;line-height:25px;color:#000;transform:scaleX(1.1527);-webkit-text-stroke:.6px #000;">1046044...</span>
<span class="t" style="left:2018.44px;top:1113.35px;font-size:11.40px;line-height:15px;color:#222;letter-spacing:0.53px;transform:scaleX(1.0300);">To Be Received</span>
<span class="t" style="left:2017.79px;top:1133.91px;font-size:19.60px;line-height:25px;color:#000;transform:scaleX(1.2253);-webkit-text-stroke:.6px #000;">356</span>
<span class="t" style="left:1841.44px;top:1210.60px;font-size:17.60px;line-height:23px;color:#111;transform:scaleX(1.0123);">Product Details</span>
<span class="t" style="left:1845.60px;top:1273.32px;font-size:8.30px;line-height:11px;color:#e0262a;letter-spacing:0.15px;transform:scaleX(1.0300);-webkit-text-stroke:.2px #e0262a;">Dashboard</span>
<span class="t" style="left:1908.21px;top:1273.32px;font-size:8.30px;line-height:11px;color:#222;transform:scaleX(1.0281);-webkit-text-stroke:.2px #222;">Sales Orders</span>
<span class="t" style="left:1979.20px;top:1273.32px;font-size:8.30px;line-height:11px;color:#222;letter-spacing:0.06px;transform:scaleX(1.0300);-webkit-text-stroke:.2px #222;">Packages</span>
<span class="t" style="left:2052.81px;top:1273.32px;font-size:8.30px;line-height:11px;color:#222;letter-spacing:0.27px;transform:scaleX(1.0300);-webkit-text-stroke:.2px #222;">Items</span>
<span class="t" style="left:2119.60px;top:1273.32px;font-size:8.30px;line-height:11px;color:#222;letter-spacing:0.20px;transform:scaleX(1.0300);-webkit-text-stroke:.2px #222;">More</span>
<svg style="left:1859px;top:1253px" width="18" height="15" viewBox="0 0 18 15"><path d="M2.4 14.4 Q.6 12 .6 9 A8.4 8.4 0 0 1 17.4 9 Q17.4 12 15.6 14.4 Z" fill="#e0262a"/><path d="M9 5.6 L9.5 10.6 A1 1 0 1 1 8.5 10.6 Z" fill="#fff"/><path d="M9 2.6v1M5 4.2l.5.8M13 4.2l-.5.8M3.2 8l.9.3M14.8 8l-.9.3" stroke="#fff" stroke-width=".8" stroke-linecap="round"/></svg>
<svg style="left:1923px;top:1250.4px" width="21" height="19" viewBox="0 0 21 19" fill="none" stroke="#333" stroke-width="1.1" stroke-linecap="round" stroke-linejoin="round"><path d="M.8 .8 H2.6 Q3.3 .9 3.5 1.6 L6.4 12 Q6.6 12.8 7.4 12.8 H17.4"/><path d="M4.4 4.6 H20 L17.8 10.4 H6"/><path d="M10.4 7.4 H15"/><circle cx="8.2" cy="16.6" r="1.4"/><circle cx="15.8" cy="16.6" r="1.4"/></svg>
<svg style="left:1990.6px;top:1255px" width="16" height="16" viewBox="0 0 16 16" fill="none" stroke="#333" stroke-width="1.1" stroke-linejoin="round"><path d="M.8 .8 H15.2 V15.2 H.8 Z"/><path d="M6 .8 V4.6 L8 3.4 L10 4.6 V.8"/></svg>
<svg style="left:2054.4px;top:1252.2px" width="19" height="17" viewBox="0 0 19 17" fill="none" stroke="#333" stroke-width="1.1" stroke-linecap="round" stroke-linejoin="round"><path d="M.8 5.6 H18.2 V7.4 H.8 Z"/><path d="M2 7.6 L3.6 15 Q3.8 16 4.8 16 H14.2 Q15.2 16 15.4 15 L17 7.6"/><path d="M5.4 5.4 V3.4 Q5.4 .8 8 .8 H11 Q13.6 .8 13.6 3.4 V5.4"/><path d="M7.2 10.6 H11.8"/></svg>
<svg style="left:2120.4px;top:1256.6px" width="19" height="7" viewBox="0 0 19 7" fill="none" stroke="#333" stroke-width="1.1"><circle cx="2.8" cy="3.5" r="2.1"/><circle cx="9.5" cy="3.5" r="2.1"/><circle cx="16.2" cy="3.5" r="2.1"/></svg>
<div class="a" style="left:1940.4px;top:1301px;width:117px;height:3.8px;border-radius:2px;background:#2e2e2e"></div>
</div></body></html>
